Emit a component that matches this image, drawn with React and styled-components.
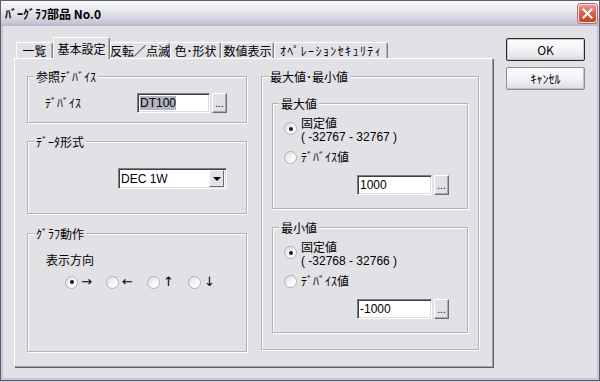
import React from 'react'
import styled, { createGlobalStyle } from 'styled-components'

const FACE = '#e2e1e6'

const GlobalStyle = createGlobalStyle`
  html, body {
    margin: 0;
    padding: 0;
    background: #c9c9d3;
  }
  body {
    font-family: "Noto Sans CJK JP", "Noto Sans", sans-serif;
    font-size: 12px;
    color: #000;
  }
`

const Window = styled.div`
  width: 600px;
  height: 381px;
  box-sizing: border-box;
  border: 1px solid #5c5c72;
  background: ${FACE};
  display: flex;
  flex-direction: column;
`

const TitleBar = styled.div`
  flex: none;
  height: 25px;
  display: flex;
  align-items: center;
  justify-content: space-between;
  padding-left: 4px;
  background: linear-gradient(to bottom, #fbfbfd 0%, #ececf2 30%, #d9d9e3 65%, #c2c2d2 92%, #b4b4c6 100%);
`

const Title = styled.span`
  font-weight: bold;
  font-size: 12px;
  line-height: 14px;
`

const CloseButton = styled.div`
  width: 19px;
  height: 19px;
  box-sizing: border-box;
  margin-right: 2px;
  border: 1px solid #f4e4e4;
  border-radius: 3px;
  background: linear-gradient(to bottom, #ec9a8e 0%, #d9604e 45%, #c5432f 100%);
  display: flex;
  align-items: center;
  justify-content: center;
  box-shadow: 0 0 0 1px #b56a62;
`

const Frame = styled.div`
  flex: 1;
  display: flex;
  padding: 11px 0 0 11px;
  border: solid #c6c6d3;
  border-width: 0 2px 2px 2px;
`

const LeftCol = styled.div`
  width: 479px;
  display: flex;
  flex-direction: column;
`

const TabRow = styled.div`
  height: 21px;
  display: flex;
  align-items: flex-end;
  padding-left: 2px;
  position: relative;
  z-index: 1;
`

const Tab = styled.div`
  width: ${p => p.$w}px;
  height: ${p => (p.$active ? 22 : 16)}px;
  margin-bottom: ${p => (p.$active ? -1 : 0)}px;
  box-sizing: border-box;
  background: ${FACE};
  border-top: 1px solid #fff;
  border-left: 1px solid #fff;
  border-right: 1px solid #7e7e88;
  border-radius: 2px 2px 0 0;
  box-shadow: inset -1px 0 0 #b3b3bc;
  display: flex;
  align-items: center;
  justify-content: center;
  white-space: nowrap;
  line-height: 14px;
  letter-spacing: ${p => p.$ls || 0}px;
  font-feature-settings: "palt";
`

const Panel = styled.div`
  width: 479px;
  height: 309px;
  box-sizing: border-box;
  border-top: 1px solid #fff;
  border-left: 1px solid #fff;
  border-right: 1px solid #a3a3ac;
  border-bottom: 1px solid #a3a3ac;
  box-shadow: 1px 1px 0 #5e5e6a;
  padding: 17px 0 0 12px;
  display: flex;
  align-items: flex-start;
  gap: 14px;
`

const Column = styled.div`
  width: ${p => p.$w}px;
  display: flex;
  flex-direction: column;
`

const Group = styled.div`
  position: relative;
  box-sizing: border-box;
  width: ${p => (p.$w ? `${p.$w}px` : 'auto')};
  height: ${p => p.$h}px;
  margin-top: ${p => p.$mt || 0}px;
  margin-left: ${p => p.$ml || 0}px;
  padding: ${p => p.$pad || '0'};
  border: 1px solid #b2b1ba;
  box-shadow: inset 1px 1px 0 #fff, 1px 1px 0 #fff;
`

const Legend = styled.span`
  position: absolute;
  top: -7px;
  left: 6px;
  padding: 0 2px;
  background: ${FACE};
  line-height: 14px;
  white-space: nowrap;
`

const FieldRow = styled.div`
  display: flex;
  align-items: center;
  margin-top: ${p => p.$mt || 0}px;
  margin-left: ${p => p.$ml || 0}px;
`

const FieldLabel = styled.span`
  width: 92px;
  line-height: 14px;
`

const TextBox = styled.div`
  width: ${p => p.$w}px;
  height: 20px;
  box-sizing: border-box;
  background: #fff;
  border-top: 1px solid #7d7d86;
  border-left: 1px solid #7d7d86;
  border-right: 1px solid #fff;
  border-bottom: 1px solid #fff;
  box-shadow: inset 1px 1px 0 #3f3f46, inset -1px -1px 0 #dcdce2;
  display: flex;
  align-items: center;
  padding-left: 2px;
  font-family: "Liberation Sans", "Noto Sans CJK JP", sans-serif;
  font-size: 12px;
`

const Selected = styled.span`
  background: #b2b4bf;
  line-height: 14px;
`

const DotsButton = styled.div`
  width: 15px;
  height: 20px;
  margin-left: 2px;
  box-sizing: border-box;
  border-top: 1px solid #fff;
  border-left: 1px solid #fff;
  border-right: 1px solid #6c6c74;
  border-bottom: 1px solid #6c6c74;
  box-shadow: inset -1px -1px 0 #a9a9b2;
  display: flex;
  align-items: flex-end;
  justify-content: center;
  font-family: "Liberation Sans", sans-serif;
  font-size: 10px;
  line-height: 10px;
  padding-bottom: 3px;
`

const Select = styled(TextBox)`
  height: 21px;
  justify-content: space-between;
  padding-right: 2px;
`

const DropArrow = styled.div`
  width: 15px;
  height: 17px;
  box-sizing: border-box;
  border-top: 1px solid #fff;
  border-left: 1px solid #fff;
  border-right: 1px solid #6c6c74;
  border-bottom: 1px solid #6c6c74;
  background: ${FACE};
  display: flex;
  align-items: center;
  justify-content: center;
`

const Triangle = styled.span`
  width: 0;
  height: 0;
  border-left: 4px solid transparent;
  border-right: 4px solid transparent;
  border-top: 4px solid #000;
`

const Caption = styled.div`
  line-height: 14px;
`

const RadioRow = styled.div`
  display: flex;
  margin-top: 8px;
  padding-left: 19px;
`

const RadioItem = styled.div`
  width: 41px;
  display: flex;
  align-items: center;
  line-height: 14px;
  height: 14px;
`

const RadioCircle = styled.span`
  flex: none;
  position: relative;
  width: 13px;
  height: 13px;
  box-sizing: border-box;
  border-radius: 50%;
  border: 1px solid #b0b0bc;
  background: linear-gradient(135deg, #d7d7e0 0%, #f8f8fa 55%, #ffffff 100%);
  margin-top: ${p => p.$top || 0}px;

  ${p => p.$on && `
    &::after {
      content: '';
      position: absolute;
      left: 3.5px;
      top: 3.5px;
      width: 4px;
      height: 4px;
      border-radius: 50%;
      background: #1c1c1c;
    }
  `}
`

const Arrow = styled.span`
  margin-left: 3px;
  font-family: "DejaVu Sans", sans-serif;
  font-size: 13px;
  color: #000;
`

const RadioOption = styled.div`
  display: flex;
  align-items: flex-start;
  margin-top: ${p => p.$mt || 0}px;
`

const OptionText = styled.div`
  margin-left: 4px;
  line-height: 14px;
`

const Range = styled.div`
  font-family: "Liberation Sans", sans-serif;
  font-size: 12px;
  line-height: 14px;
`

const ButtonCol = styled.div`
  margin-left: 13px;
  display: flex;
  flex-direction: column;
`

const DialogButton = styled.div`
  width: 79px;
  height: 23px;
  box-sizing: border-box;
  margin-top: ${p => p.$mt}px;
  border: 1px solid ${p => (p.$default ? '#2f2424' : '#8b8b99')};
  border-radius: 2px;
  background: linear-gradient(to bottom, #fdfdfe 0%, #f0f0f3 60%, #dcdce3 100%);
  box-shadow: ${p => (p.$default ? 'inset 0 0 0 1px #c9c9d3' : 'inset -1px -1px 0 #c0c0c9')};
  display: flex;
  align-items: center;
  justify-content: center;
  line-height: 14px;
`

const tabs = [
  { label: '一覧', w: 37 },
  { label: '基本設定', w: 57, active: true },
  { label: '反転／点滅', w: 60 },
  { label: '色･形状', w: 51 },
  { label: '数値表示', w: 53 },
  { label: 'ｵﾍﾟﾚｰｼｮﾝｾｷｭﾘﾃｨ', w: 114, ls: 1.4 },
]

const directions = ['→', '←', '↑', '↓']

const LimitGroup = ({ title, range, value, mt }) => (
  <Group $w={196} $h={106} $mt={mt} $pad="12px 0 0 11px">
    <Legend>{title}</Legend>
    <RadioOption>
      <RadioCircle $on $top={6} />
      <OptionText>
        固定値
        <Range>{range}</Range>
      </OptionText>
    </RadioOption>
    <RadioOption $mt={6}>
      <RadioCircle $top={1} />
      <OptionText>ﾃﾞﾊﾞｲｽ値</OptionText>
    </RadioOption>
    <FieldRow $mt={11} $ml={73}>
      <TextBox $w={75}>{value}</TextBox>
      <DotsButton>...</DotsButton>
    </FieldRow>
  </Group>
)

export default function App() {
  return (
    <>
      <GlobalStyle />
      <Window>
        <TitleBar>
          <Title>ﾊﾞｰｸﾞﾗﾌ部品 No.0</Title>
          <CloseButton>
            <svg width="11" height="11" viewBox="0 0 11 11">
              <path d="M1.5 1.5 L9.5 9.5 M9.5 1.5 L1.5 9.5" stroke="#fff" strokeWidth="2" strokeLinecap="square" />
            </svg>
          </CloseButton>
        </TitleBar>
        <Frame>
          <LeftCol>
            <TabRow>
              {tabs.map(t => (
                <Tab key={t.label} $w={t.w} $active={t.active} $ls={t.ls}>{t.label}</Tab>
              ))}
            </TabRow>
            <Panel>
              <Column $w={220}>
                <Group $h={47} $pad="16px 0 0 17px">
                  <Legend>参照ﾃﾞﾊﾞｲｽ</Legend>
                  <FieldRow>
                    <FieldLabel>ﾃﾞﾊﾞｲｽ</FieldLabel>
                    <TextBox $w={73}><Selected>DT100</Selected></TextBox>
                    <DotsButton>...</DotsButton>
                  </FieldRow>
                </Group>
                <Group $h={73} $mt={18} $pad="26px 0 0 90px">
                  <Legend>ﾃﾞｰﾀ形式</Legend>
                  <Select $w={109}>
                    DEC 1W
                    <DropArrow><Triangle /></DropArrow>
                  </Select>
                </Group>
                <Group $h={119} $mt={19} $pad="19px 0 0 18px">
                  <Legend>ｸﾞﾗﾌ動作</Legend>
                  <Caption>表示方向</Caption>
                  <RadioRow>
                    {directions.map((d, i) => (
                      <RadioItem key={d}>
                        <RadioCircle $on={i === 0} />
                        <Arrow>{d}</Arrow>
                      </RadioItem>
                    ))}
                  </RadioRow>
                </Group>
              </Column>
              <Column $w={218}>
                <Group $h={274} $pad="0 0 0 10px">
                  <Legend>最大値･最小値</Legend>
                  <LimitGroup title="最大値" range="( -32767 - 32767 )" value="1000" mt={26} />
                  <LimitGroup title="最小値" range="( -32768 - 32766 )" value="-1000" mt={18} />
                </Group>
              </Column>
            </Panel>
          </LeftCol>
          <ButtonCol>
            <DialogButton $default $mt={1}>OK</DialogButton>
            <DialogButton $mt={6}>ｷｬﾝｾﾙ</DialogButton>
          </ButtonCol>
        </Frame>
      </Window>
    </>
  )
}
